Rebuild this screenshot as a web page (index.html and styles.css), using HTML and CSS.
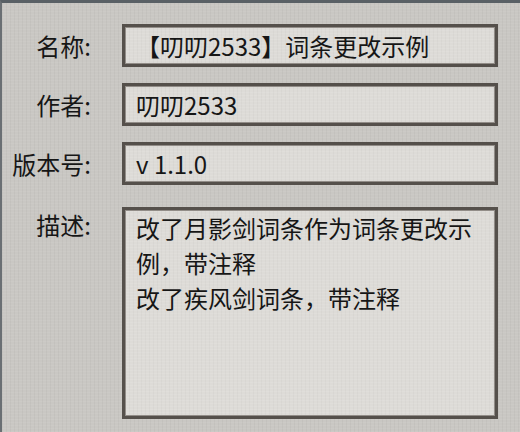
FILE: index.html
```html
<!DOCTYPE html>
<html lang="zh-CN">
<head>
<meta charset="utf-8">
<link rel="stylesheet" href="styles.css">
</head>
<body>
<div class="panel">
  <div class="form">
    <div class="label">名称:</div>
    <div class="field">【叨叨2533】词条更改示例</div>
    <div class="label">作者:</div>
    <div class="field">叨叨2533</div>
    <div class="label">版本号:</div>
    <div class="field">v 1.1.0</div>
    <div class="label label-top">描述:</div>
    <div class="field area">改了月影剑词条作为词条更改示例，带注释<br>改了疾风剑词条，带注释</div>
  </div>
</div>
</body>
</html>
```

FILE: styles.css
```css
html, body {
  margin: 0;
  padding: 0;
  width: 520px;
  height: 432px;
  overflow: hidden;
}
body {
  background: #c8c6c2;
  font-family: "Noto Sans CJK SC", "Noto Sans", sans-serif;
  color: #161616;
}
.panel {
  box-sizing: border-box;
  width: 520px;
  height: 432px;
  border-top: 3px solid #596065;
  border-left: 2px solid #6a6f73;
  background-color: #c9c7c3;
  background-image:
    repeating-linear-gradient(0deg, rgba(255,255,255,0.05) 0 1px, transparent 1px 3px),
    repeating-linear-gradient(90deg, rgba(0,0,0,0.03) 0 1px, transparent 1px 4px);
  padding-top: 21px;
}
.form {
  display: grid;
  grid-template-columns: 89px 376px;
  column-gap: 31px;
  row-gap: 16px;
  align-items: center;
}
.label {
  font-size: 24px;
  text-align: right;
  line-height: 43px;
}
.label-top {
  align-self: start;
  margin-top: 6px;
  line-height: 35px;
}
.field {
  box-sizing: border-box;
  height: 43px;
  border: 3px solid #55504b;
  box-shadow: inset 0 0 0 1px #928d88;
  background-color: #dddbd7;
  background-image:
    repeating-linear-gradient(0deg, rgba(255,255,255,0.08) 0 1px, transparent 1px 3px),
    repeating-linear-gradient(90deg, rgba(0,0,0,0.025) 0 1px, transparent 1px 4px);
  padding: 0 11px;
  font-size: 24px;
  line-height: 37px;
  white-space: nowrap;
  overflow: hidden;
}
.area {
  margin-top: 6px;
  height: 212px;
  white-space: normal;
  line-height: 35px;
  padding-top: 0;
}
```
